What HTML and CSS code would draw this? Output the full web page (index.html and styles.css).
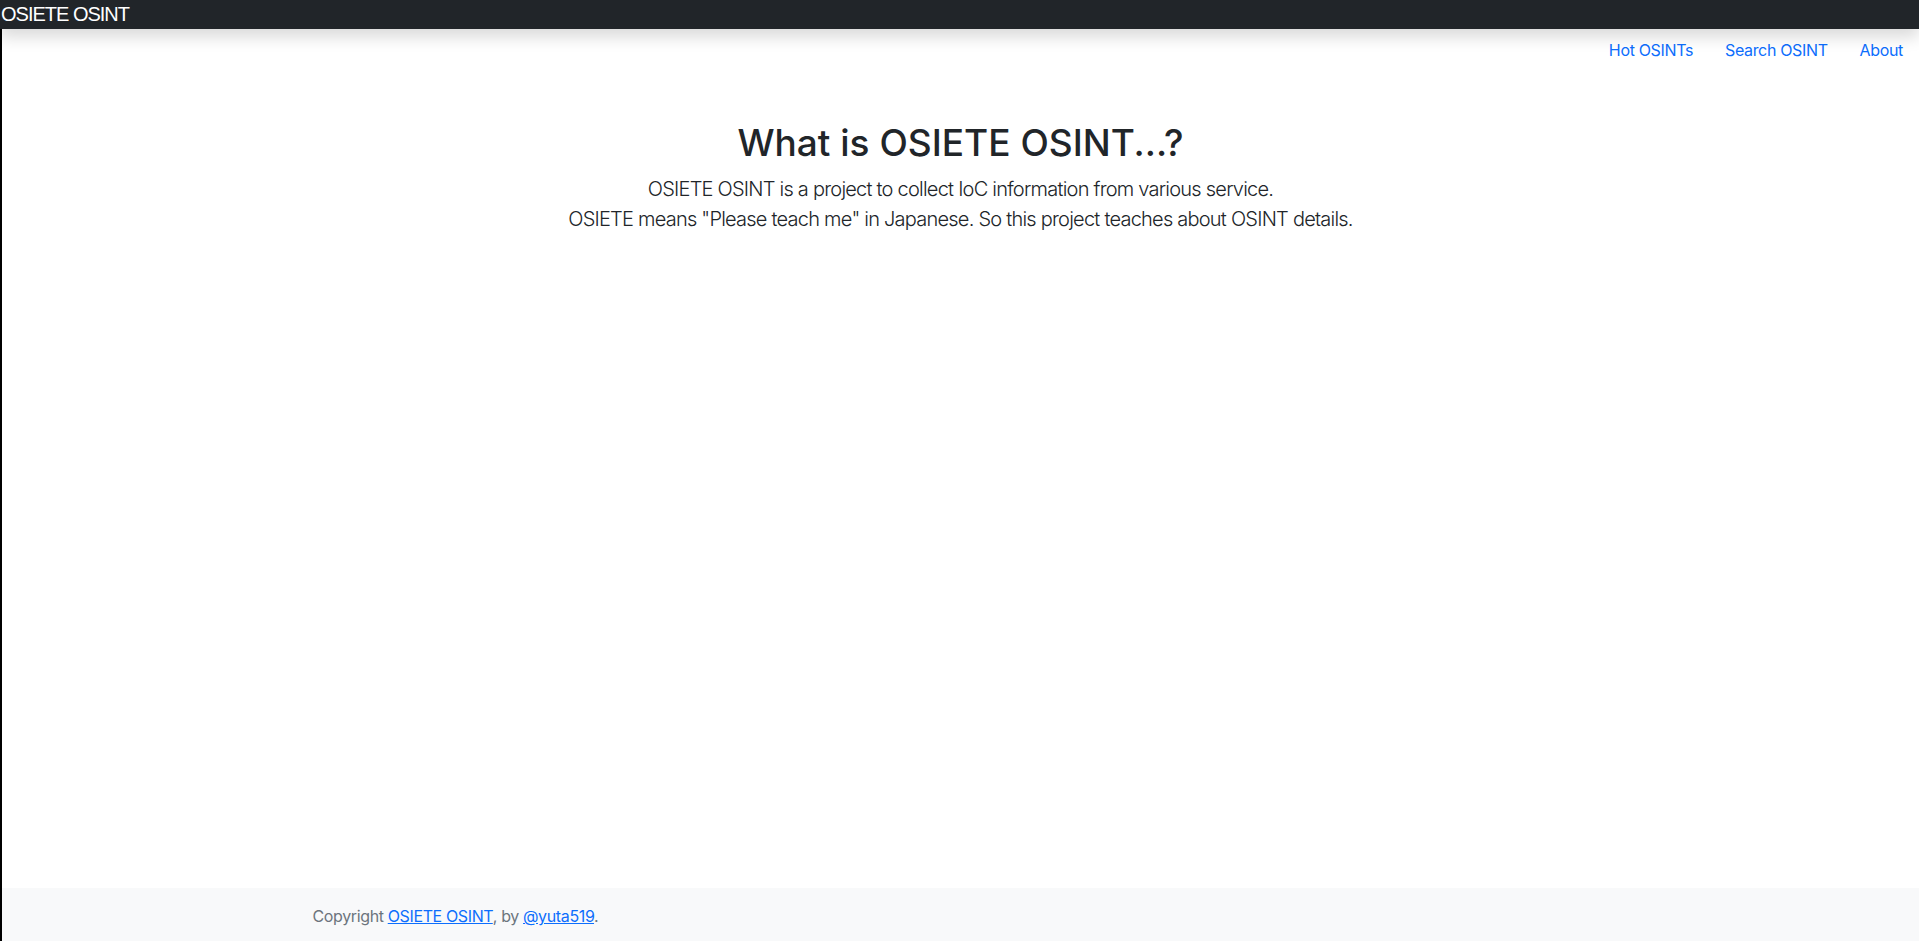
FILE: index.html
```html
<!DOCTYPE html>
<html lang="en">
<head>
<meta charset="utf-8">
<title>OSIETE OSINT</title>
<link rel="stylesheet" href="styles.css">
</head>
<body>
<header class="topbar">OSIETE OSINT</header>
<div class="page">
  <nav class="nav">
    <a class="nav-link" href="#">Hot OSINTs</a>
    <a class="nav-link" href="#">Search OSINT</a>
    <a class="nav-link" href="#">About</a>
  </nav>
  <main class="hero">
    <h1 class="hero-title">What is OSIETE OSINT...?</h1>
    <p class="lead">OSIETE OSINT is a project to collect IoC information from various service.<br>OSIETE means "Please teach me" in Japanese. So this project teaches about OSINT details.</p>
  </main>
  <footer class="footer">
    <div class="container">
      <span class="muted">Copyright <a href="#">OSIETE OSINT</a>, by <a href="#">@yuta519</a>.</span>
    </div>
  </footer>
</div>
</body>
</html>
```
FILE: styles.css
```css
* { box-sizing: border-box; }
html, body { margin: 0; padding: 0; height: 100%; }
body {
  display: flex;
  flex-direction: column;
  font-family: Inter, "Noto Sans", sans-serif;
  font-size: 16px;
  line-height: 1.5;
  color: #212529;
  background: #fff;
}
.topbar {
  position: relative;
  z-index: 2;
  height: 29px;
  line-height: 29px;
  background: #212529;
  color: #fff;
  font-family: "Liberation Sans", Arial, sans-serif;
  font-size: 20px;
  letter-spacing: -1px;
  padding-left: 1px;
  box-shadow: 0 8px 16px rgba(0, 0, 0, 0.15);
}
.page {
  flex: 1;
  display: flex;
  flex-direction: column;
  border-left: 2px solid #000;
}
.nav {
  display: flex;
  justify-content: flex-end;
  padding: 9px 0 8px;
}
.nav-link {
  padding: 0 16px;
  line-height: 24px;
  letter-spacing: -0.35px;
  color: #0d6efd;
  text-decoration: none;
}
.hero {
  flex: 1;
  text-align: center;
  padding-top: 51px;
}
.hero-title {
  margin: 0 0 9px;
  font-size: 37px;
  font-weight: 500;
  line-height: 1.2;
}
.lead {
  margin: 0;
  font-size: 20px;
  font-weight: 300;
  line-height: 1.5;
  letter-spacing: -0.77px;
}
.footer {
  background: #f8f9fa;
  padding: 16px 0 13px;
}
.container {
  max-width: 1320px;
  margin: 0 auto;
  padding: 0 12px;
}
.muted { color: #6c757d; letter-spacing: -0.37px; }
.footer a { color: #0d6efd; text-decoration: underline; }
```
